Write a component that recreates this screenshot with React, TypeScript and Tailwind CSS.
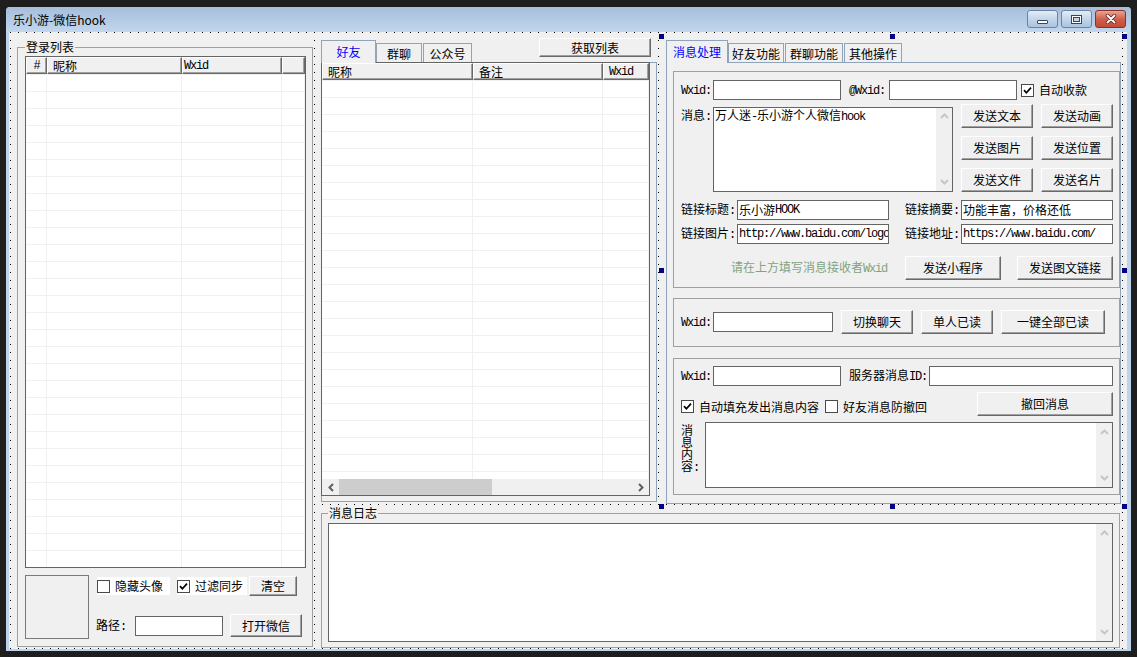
import React from "react";

const cx = (...a: (string | false | undefined | null)[]) => a.filter(Boolean).join(" ");

function T({ s }: { s: string }) {
  const parts = s.match(/[\x20-\x7e]+|[^\x20-\x7e]+/g) || [];
  return (
    <>
      {parts.map((p, i) =>
        /^[\x20-\x7e]/.test(p) ? (
          <span key={i} className="font-['Liberation_Mono',monospace] tracking-[-1.2px]">
            {p}
          </span>
        ) : (
          <span key={i}>{p}</span>
        )
      )}
    </>
  );
}

const Up = () => (
  <svg width="9" height="6" viewBox="0 0 9 6">
    <path d="M1 5L4.5 1.5L8 5" fill="none" stroke="#c6c6c6" strokeWidth="2" />
  </svg>
);
const Down = () => (
  <svg width="9" height="6" viewBox="0 0 9 6">
    <path d="M1 1L4.5 4.5L8 1" fill="none" stroke="#c6c6c6" strokeWidth="2" />
  </svg>
);

function Btn({ className, children }: { className: string; children: React.ReactNode }) {
  return (
    <div
      className={cx(
        "flex shrink-0 items-center justify-center whitespace-nowrap bg-[#f0f0f0] border border-t-white border-l-white border-r-[#696969] border-b-[#696969] shadow-[inset_-1px_-1px_0_#a0a0a0]",
        className
      )}
    >
      {children}
    </div>
  );
}

function Input({ className, value }: { className: string; value?: string }) {
  return (
    <div
      className={cx(
        "flex shrink-0 items-center h-[20px] border border-[#646464] bg-white px-[1px] overflow-hidden whitespace-nowrap",
        className
      )}
    >
      {value ? <T s={value} /> : null}
    </div>
  );
}

function Check({ on }: { on?: boolean }) {
  return (
    <div className="flex shrink-0 items-center justify-center w-[13px] h-[13px] border border-[#4a4a4a] bg-white">
      {on ? (
        <svg width="9" height="9" viewBox="0 0 9 9">
          <path d="M1 4.2L3.4 6.8L8 1.6" fill="none" stroke="#000" strokeWidth="1.7" />
        </svg>
      ) : null}
    </div>
  );
}

function TextArea({ className, text, up, down }: { className: string; text?: string; up: string; down: string }) {
  return (
    <div className={cx("flex shrink-0 border border-[#646464] bg-white", className)}>
      <div className="min-w-0 flex-1 pl-[1px] leading-[14px] whitespace-nowrap">{text ? <T s={text} /> : null}</div>
      <div className={cx("flex w-[16px] h-full flex-col items-center justify-between bg-[#f0f0f0]", up, down)}>
        <Up />
        <Down />
      </div>
    </div>
  );
}

type Col = { w: string; label: string; cls: string };

function HScroll() {
  return (
    <div className="flex h-[16px] shrink-0 items-center bg-[#f0f0f0]">
      <div className="flex w-[17px] h-full items-center justify-center">
        <svg width="6" height="9" viewBox="0 0 6 9">
          <path d="M5 1L1.5 4.5L5 8" fill="none" stroke="#606060" strokeWidth="2" />
        </svg>
      </div>
      <div className="w-[153px] h-full bg-[#cdcdcd]" />
      <div className="flex-1" />
      <div className="flex w-[17px] h-full items-center justify-center">
        <svg width="6" height="9" viewBox="0 0 6 9">
          <path d="M1 1L4.5 4.5L1 8" fill="none" stroke="#606060" strokeWidth="2" />
        </svg>
      </div>
    </div>
  );
}

function ListView({ className, cols, rows, hscroll }: { className: string; cols: Col[]; rows: number; hscroll?: boolean }) {
  return (
    <div className={cx("flex shrink-0 flex-col border border-[#646464] bg-white overflow-hidden", className)}>
      <div className="flex h-[17px] shrink-0">
        {cols.map((c, i) => (
          <div
            key={i}
            className={cx(
              "flex h-full shrink-0 items-center overflow-hidden whitespace-nowrap bg-[#f0f0f0] border border-t-white border-l-white border-r-[#696969] border-b-[#696969] shadow-[inset_-1px_-1px_0_#a0a0a0]",
              c.w,
              c.cls
            )}
          >
            <T s={c.label} />
          </div>
        ))}
      </div>
      <div className="flex-1 overflow-hidden">
        {Array.from({ length: rows }).map((_, r) => (
          <div key={r} className="flex h-[17px] border-t border-[#f0f0f0]">
            {cols.map((c, i) => (
              <div key={i} className={cx("h-full shrink-0 border-r border-[#f0f0f0]", c.w)} />
            ))}
          </div>
        ))}
      </div>
      {hscroll ? <HScroll /> : null}
    </div>
  );
}

function Tab({ label, active, w }: { label: string; active?: boolean; w: string }) {
  return active ? (
    <div
      className={cx(
        "relative flex h-[23px] -mb-px shrink-0 items-center justify-center pb-[1px] border-t border-x border-[#8fa4b8] bg-[#f0f0f0] text-[#0000ff]",
        w
      )}
    >
      {label}
    </div>
  ) : (
    <div className={cx("flex h-[19px] shrink-0 items-center justify-center pt-[1px] border-t border-x border-[#8fa4b8] bg-[#f0f0f0]", w)}>
      {label}
    </div>
  );
}

const leftCols: Col[] = [
  { w: "w-[21px]", label: "#", cls: "justify-center" },
  { w: "w-[135px]", label: "昵称", cls: "pl-[5px]" },
  { w: "w-[100px]", label: "Wxid", cls: "pl-[1px]" },
  { w: "flex-1", label: "", cls: "" },
];

const midCols: Col[] = [
  { w: "w-[151px]", label: "昵称", cls: "pl-[5px]" },
  { w: "w-[130px]", label: "备注", cls: "pl-[5px]" },
  { w: "flex-1", label: "Wxid", cls: "pl-[5px]" },
];

function Handle({ className }: { className: string }) {
  return <div className={cx("absolute w-[5px] h-[5px] bg-[#000080]", className)} />;
}

export default function App() {
  return (
    <div className="w-[1137px] h-[657px] overflow-hidden bg-[#1e1e1e] pl-[6px] pt-[7px] font-['Noto_Sans_CJK_SC','Noto_Sans',sans-serif] text-[12px] leading-[12px] text-black">
      <div className="flex w-[1125px] h-[644px] flex-col rounded-t-[4px] bg-[#bdd3ec]">
        {/* title bar */}
        <div className="flex h-[25px] shrink-0 items-start rounded-t-[4px] bg-gradient-to-b from-[#a6bedb] to-[#c2d7ee]">
          <div className="flex h-full items-center pl-[7px] text-[12px]">乐小游-微信hook</div>
          <div className="ml-auto mr-[5px] mt-[3px] flex gap-[3px]">
            <div className="flex w-[31px] h-[18px] items-end justify-center rounded-[3px] border border-[#6b84a3] bg-gradient-to-b from-[#e4edf7] via-[#c3d6eb] to-[#aac3df] pb-[3px]">
              <div className="w-[11px] h-[4px] rounded-[1px] border border-[#37475a] bg-white" />
            </div>
            <div className="flex w-[31px] h-[18px] items-center justify-center rounded-[3px] border border-[#6b84a3] bg-gradient-to-b from-[#e4edf7] via-[#c3d6eb] to-[#aac3df]">
              <div className="w-[11px] h-[9px] border border-[#37475a] bg-white p-[1px]">
                <div className="w-full h-full border border-[#37475a] bg-[#c3d6eb]" />
              </div>
            </div>
            <div className="flex w-[31px] h-[18px] items-center justify-center rounded-[3px] border border-[#8b3126] bg-gradient-to-b from-[#e8a493] via-[#d0604d] to-[#c44a35]">
              <svg width="12" height="10" viewBox="0 0 12 10">
                <path d="M2.5 1.5L9.5 8.5M9.5 1.5L2.5 8.5" stroke="#5a2018" strokeWidth="3.4" strokeLinecap="round" />
                <path d="M2.5 1.5L9.5 8.5M9.5 1.5L2.5 8.5" stroke="#fff" strokeWidth="2" strokeLinecap="round" />
              </svg>
            </div>
          </div>
        </div>

        {/* client (designer grid) */}
        <div className="relative ml-[3px] flex w-[1118px] h-[617px] items-start bg-[#f0f0f0] bg-[conic-gradient(at_1px_1px,transparent_270deg,#000_0)] bg-[length:8px_8px] bg-[position:1px_0px]">
          {/* left group */}
          <div className="ml-[5px] mt-[6px] shrink-0 bg-[#f0f0f0] pl-[3px] pt-[3px]">
            <fieldset className="w-[296px] h-[606px] border border-[#a0a0a0]">
              <legend className="ml-[7px] h-[12px] px-[1px] leading-[12px]">登录列表</legend>
              <div className="pl-[7px] pt-[3px]">
                <ListView className="w-[281px] h-[512px]" cols={leftCols} rows={30} />
                <div className="mt-[7px] flex">
                  <div className="w-[64px] h-[64px] shrink-0 border border-[#7a7a7a]" />
                  <div className="ml-[8px] flex flex-col">
                    <div className="mt-[1px] flex h-[20px] items-center">
                      <div className="flex w-[73px] h-[18px] items-center bg-white">
                        <Check />
                        <span className="ml-[5px]">隐藏头像</span>
                      </div>
                      <div className="ml-[7px] flex w-[70px] h-[18px] items-center bg-white">
                        <Check on />
                        <span className="ml-[5px]">过滤同步</span>
                      </div>
                      <Btn className="ml-[2px] w-[48px] h-[20px]">清空</Btn>
                    </div>
                    <div className="mt-[18px] -ml-[1px] flex h-[23px] items-center">
                      <span className="w-[32px] whitespace-nowrap">
                        <T s="路径:" />
                      </span>
                      <Input className="ml-[7px] w-[88px]" />
                      <Btn className="ml-[7px] w-[72px] h-[23px]">打开微信</Btn>
                    </div>
                  </div>
                </div>
              </div>
            </fieldset>
          </div>

          {/* right column */}
          <div className="ml-[8px] mt-[6px] flex w-[800px] shrink-0 flex-col">
            <div className="flex items-start">
              {/* middle tab control */}
              <div className="w-[336px] shrink-0 bg-[#f0f0f0]">
                <div className="flex h-[25px] items-end border-b border-[#8fa4b8]">
                  <Tab label="好友" active w="w-[55px]" />
                  <Tab label="群聊" w="w-[46px]" />
                  <div className="ml-[1px]">
                    <Tab label="公众号" w="w-[49px]" />
                  </div>
                  <Btn className="ml-auto mr-[6px] self-start w-[112px] h-[19px]">获取列表</Btn>
                </div>
                <div className="h-[440px] border-x border-b border-[#8fa4b8]">
                  <ListView className="-ml-px -mt-px w-[329px] h-[434px]" cols={midCols} rows={25} hscroll />
                </div>
              </div>

              {/* right tab control */}
              <div className="ml-[4px] w-[460px] shrink-0 bg-[#f0f0f0] pl-[5px]">
                <div className="flex h-[25px] items-end border-b border-[#8fa4b8]">
                  <Tab label="消息处理" active w="w-[62px]" />
                  <Tab label="好友功能" w="w-[56px]" />
                  <div className="ml-[1px]">
                    <Tab label="群聊功能" w="w-[58px]" />
                  </div>
                  <div className="ml-[1px]">
                    <Tab label="其他操作" w="w-[58px]" />
                  </div>
                </div>
                <div className="h-[441px] border-x border-b border-[#8fa4b8] pl-[6px] pt-[8px]">
                  {/* group 1 */}
                  <div className="flex w-[447px] h-[217px] flex-col border border-[#a0a0a0] pl-[7px] pt-[8px]">
                    <div className="flex h-[20px] items-center">
                      <span className="w-[32px]">
                        <T s="Wxid:" />
                      </span>
                      <Input className="w-[128px]" />
                      <span className="ml-[8px] w-[40px]">
                        <T s="@Wxid:" />
                      </span>
                      <Input className="w-[128px]" />
                      <div className="ml-[4px]">
                        <Check on />
                      </div>
                      <span className="ml-[5px]">自动收款</span>
                    </div>
                    <div className="mt-[4px] flex h-[88px]">
                      <span className="w-[32px] pt-[5px]">
                        <T s="消息:" />
                      </span>
                      <TextArea
                        className="mt-[3px] w-[240px] h-[85px]"
                        text="万人迷-乐小游个人微信hook"
                        up="pt-[5px]"
                        down="pb-[6px]"
                      />
                      <div className="ml-[8px] grid grid-cols-[72px_72px] gap-x-[8px] gap-y-[8px]">
                        <Btn className="w-[72px] h-[24px]">发送文本</Btn>
                        <Btn className="w-[72px] h-[24px]">发送动画</Btn>
                        <Btn className="w-[72px] h-[24px]">发送图片</Btn>
                        <Btn className="w-[72px] h-[24px]">发送位置</Btn>
                        <Btn className="w-[72px] h-[24px]">发送文件</Btn>
                        <Btn className="w-[72px] h-[24px]">发送名片</Btn>
                      </div>
                    </div>
                    <div className="mt-[8px] flex h-[20px] items-center">
                      <span className="w-[56px]">
                        <T s="链接标题:" />
                      </span>
                      <Input className="w-[152px]" value="乐小游HOOK" />
                      <span className="ml-[16px] w-[56px]">
                        <T s="链接摘要:" />
                      </span>
                      <Input className="w-[152px]" value="功能丰富，价格还低" />
                    </div>
                    <div className="mt-[4px] flex h-[20px] items-center">
                      <span className="w-[56px]">
                        <T s="链接图片:" />
                      </span>
                      <Input className="w-[152px]" value="http://www.baidu.com/logo" />
                      <span className="ml-[16px] w-[56px]">
                        <T s="链接地址:" />
                      </span>
                      <Input className="w-[152px]" value="https://www.baidu.com/" />
                    </div>
                    <div className="mt-[12px] flex h-[24px] items-center">
                      <span className="ml-[50px] w-[174px] text-[#7fa47f]">
                        <T s="请在上方填写消息接收者Wxid" />
                      </span>
                      <Btn className="w-[96px] h-[24px]">发送小程序</Btn>
                      <Btn className="ml-[16px] w-[96px] h-[24px]">发送图文链接</Btn>
                    </div>
                  </div>

                  {/* group 2 */}
                  <div className="mt-[10px] w-[447px] h-[49px] border border-[#a0a0a0] pl-[7px] pt-[11px]">
                    <div className="flex h-[24px] items-center">
                      <span className="w-[32px]">
                        <T s="Wxid:" />
                      </span>
                      <Input className="w-[120px]" />
                      <Btn className="ml-[8px] w-[72px] h-[24px]">切换聊天</Btn>
                      <Btn className="ml-[8px] w-[72px] h-[24px]">单人已读</Btn>
                      <Btn className="ml-[8px] w-[104px] h-[24px]">一键全部已读</Btn>
                    </div>
                  </div>

                  {/* group 3 */}
                  <div className="mt-[11px] flex w-[447px] h-[137px] flex-col border border-[#a0a0a0] pl-[7px] pt-[7px]">
                    <div className="flex h-[20px] items-center">
                      <span className="w-[32px]">
                        <T s="Wxid:" />
                      </span>
                      <Input className="w-[128px]" />
                      <span className="ml-[8px] w-[80px]">
                        <T s="服务器消息ID:" />
                      </span>
                      <Input className="w-[184px]" />
                    </div>
                    <div className="mt-[6px] flex h-[24px] items-start">
                      <div className="mt-[8px] flex h-[13px] items-center">
                        <Check on />
                        <span className="ml-[5px] w-[126px]">自动填充发出消息内容</span>
                        <Check />
                        <span className="ml-[5px] w-[84px]">好友消息防撤回</span>
                      </div>
                      <Btn className="ml-[50px] w-[136px] h-[24px]">撤回消息</Btn>
                    </div>
                    <div className="mt-[6px] flex">
                      <div className="w-[24px] pt-[2px]">
                        <p className="w-[19px] leading-[12px] break-all">
                          <T s="消息内容:" />
                        </p>
                      </div>
                      <TextArea className="w-[408px] h-[66px]" up="pt-[6px]" down="pb-[6px]" />
                    </div>
                  </div>
                </div>
              </div>
            </div>

            {/* message log */}
            <div className="mt-[1px] w-[799px] bg-[#f0f0f0] pt-[2px]">
              <fieldset className="w-[799px] h-[141px] border border-[#a0a0a0]">
                <legend className="ml-[6px] h-[12px] px-[1px] leading-[12px]">消息日志</legend>
                <div className="pl-[6px] pt-[4px]">
                  <TextArea className="w-[785px] h-[119px]" up="pt-[6px]" down="pb-[6px]" />
                </div>
              </fieldset>
            </div>
          </div>

          {/* selection handles of the selected tab control */}
          <Handle className="left-[650px] top-[2px]" />
          <Handle className="left-[881px] top-[2px]" />
          <Handle className="left-[1113px] top-[2px]" />
          <Handle className="left-[650px] top-[236px]" />
          <Handle className="left-[1113px] top-[236px]" />
          <Handle className="left-[650px] top-[472px]" />
          <Handle className="left-[881px] top-[472px]" />
          <Handle className="left-[1113px] top-[472px]" />
        </div>
      </div>
    </div>
  );
}
